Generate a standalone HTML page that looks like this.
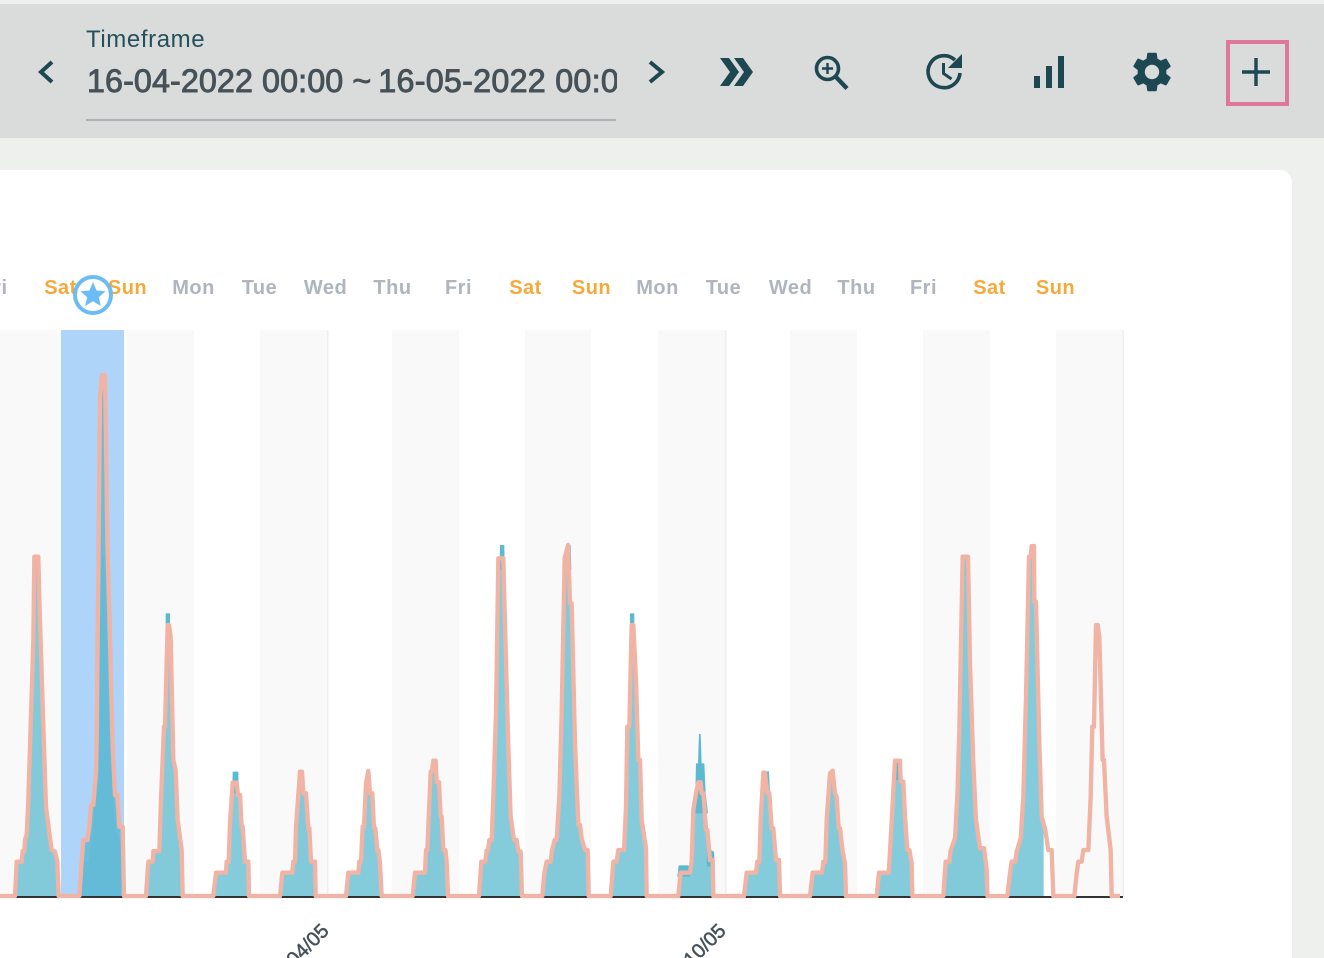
<!DOCTYPE html>
<html>
<head>
<meta charset="utf-8">
<style>
html,body{margin:0;padding:0;width:1324px;height:958px;overflow:hidden;background:#eef0ee;}
body{position:relative;font-family:"Liberation Sans",sans-serif;}
.bar{position:absolute;left:0;top:4px;width:1324px;height:134px;background:#dadcdc;}
.card{position:absolute;left:-20px;top:170px;width:1312px;height:820px;background:#fff;border-radius:12px;}
.tf{position:absolute;left:86px;top:26px;font-size:24px;line-height:27px;letter-spacing:.6px;color:#24505a;}
.date{position:absolute;left:87px;top:62px;width:530px;height:40px;overflow:hidden;white-space:nowrap;font-size:32.3px;line-height:38px;letter-spacing:.08px;color:#465158;-webkit-text-stroke:.9px #465158;}
.date .t{letter-spacing:-2px;}
.date .s{letter-spacing:.25px;}
.ul{position:absolute;left:86px;top:119px;width:530px;height:2px;background:#aab0b3;}
.box{position:absolute;left:1226px;top:40px;width:55px;height:58px;border:4px solid #dd789c;}
svg{position:absolute;left:0;top:0;}
</style>
</head>
<body>
<div class="bar"></div>
<div class="card"></div>
<div class="tf">Timeframe</div>
<div class="date">16-04-2022 00:00 <span class="t">~</span> <span class="s">16-05-2022 00:0</span></div>
<div class="ul"></div>
<div class="box"></div>
<svg width="1324" height="958" viewBox="0 0 1324 958">
  <defs>
    <path id="a" d="M0 1068H45L50 965H65L68 933H73L75 900L80 885L85 780L92 560L100 300L103 50H115L118 180L125 400L132 620L138 800L150 895L155 930L165 935L172 965L176 1068H238L245 965L250 900H262L268 860L273 795H280L288 700L290 600L296 0L300 -426L306 -495H315L318 -300L322 0L330 300L338 620L345 765H352L358 860H368L372 1068H438L445 965H458L460 933H478L483 780L492 560H495L503 255H507L512 290L520 660L527 690L533 840L545 930L548 1068H640L648 998H678L680 965H686L690 850L698 728H710L714 765H720L725 860H728L735 965H745L747 1068H840L847 998H877L880 965H885L888 860L900 695H906L910 760H918L925 865H928L933 965H945L947 1068H1020"/>
    <path id="b" d="M0 1098H18L25 1028H55L58 995H63L68 890H72L78 760L85 723L90 790H97L102 895H106L112 960H115L120 1000L125 1098H218L225 1028H255L258 960H262L268 820L272 725H276L280 692H287L290 757H297L302 860H305L310 960H316L320 995L324 1098H417L424 995H436L440 962H444L448 930H455L460 800L468 550L475 85H490L495 280L505 650L512 860L522 930H530L535 965H542L546 1098H607L613 1030L620 995H632L636 962L644 930H650L658 800L665 550L674 85L684 45L690 220H695L705 640L715 885H720L725 925L735 960H743L746 1098H812L820 995H830L835 960H852L858 830L862 590H868L875 285H880L888 450L895 690H900L905 870L918 955L920 1098H1015L1022 1028H1050L1055 995L1060 840L1068 790L1075 757H1082L1085 790H1090L1098 900H1102L1110 990H1118L1120 1098H1200"/>
    <path id="c" d="M0 1098H42L50 1028H78L82 995H88L92 870L100 728H105L112 790H118L125 895H130L138 990H147L150 1098H240L248 1028H276L280 995H286L290 870L300 730L308 722L315 790L320 800L326 895H330L338 965L345 1000L348 1098H440L447 1028H476L480 965L488 820L495 692H510L512 755H520L525 860L532 960H538L545 1000L547 1098H640L647 995H658L662 962L675 925L682 800L688 600L698 80H714L720 400L730 700L738 870L750 955H762L770 1020L772 1098H832L840 1030L845 995H856L860 965L872 925L880 800L888 500L897 80H902L905 48H912L913 215H918L928 640L935 860L945 895L955 960H965L970 1098H1033L1040 1030L1045 995H1055L1060 960H1075L1082 800L1087 590H1092L1098 285H1103L1108 320L1118 690H1122L1130 860L1142 960L1145 1098H1170"/>
    <clipPath id="cl"><rect x="-10" y="0" width="951" height="1100"/></clipPath>
  </defs>

  <!-- bands -->
  <g fill="#f9f9f9">
    <rect x="0" y="330" width="61" height="566"/>
    <rect x="127" y="330" width="67" height="566"/>
    <rect x="260" y="330" width="67" height="566"/>
    <rect x="392" y="330" width="67" height="566"/>
    <rect x="525" y="330" width="66" height="566"/>
    <rect x="658" y="330" width="67" height="566"/>
    <rect x="790" y="330" width="67" height="566"/>
    <rect x="923" y="330" width="67" height="566"/>
    <rect x="1056" y="330" width="67" height="566"/>
  </g>
  <g fill="#efefef">
    <rect x="327" y="330" width="1.5" height="566"/>
    <rect x="725" y="330" width="1.5" height="566"/>
    <rect x="1122.5" y="330" width="1.5" height="566"/>
  </g>
  <rect x="61" y="330" width="63" height="566" fill="#aed4fa"/>

  <!-- axis -->
  <rect x="0" y="896" width="1123" height="2" fill="#333"/>

  <!-- day labels -->
  <g font-family="'Liberation Sans',sans-serif" font-size="20" font-weight="700" letter-spacing=".5" text-anchor="middle" fill="#adb5bf">
    <text x="-6" y="294">Fri</text>
    <text x="60.5" y="294" fill="#f5a93b">Sat</text>
    <text x="127.5" y="294" fill="#f5a93b">Sun</text>
    <text x="193.5" y="294">Mon</text>
    <text x="259.5" y="294">Tue</text>
    <text x="325.5" y="294">Wed</text>
    <text x="392.5" y="294">Thu</text>
    <text x="458.5" y="294">Fri</text>
    <text x="525.5" y="294" fill="#f5a93b">Sat</text>
    <text x="591.5" y="294" fill="#f5a93b">Sun</text>
    <text x="657.5" y="294">Mon</text>
    <text x="723.5" y="294">Tue</text>
    <text x="790.5" y="294">Wed</text>
    <text x="856.5" y="294">Thu</text>
    <text x="923.5" y="294">Fri</text>
    <text x="989.5" y="294" fill="#f5a93b">Sat</text>
    <text x="1055.5" y="294" fill="#f5a93b">Sun</text>
  </g>

  <!-- star marker -->
  <circle cx="93" cy="295" r="18" fill="#fff" stroke="#6bbcf5" stroke-width="4"/>
  <polygon points="93,282 96.6,290.5 105.5,291.2 98.8,297.2 100.8,306 93,301.3 85.2,306 87.2,297.2 80.5,291.2 89.4,290.5" fill="#6bbcf5"/>

  <!-- teal areas -->
  <g transform="translate(0,540) scale(.33333)">
    <use href="#a" fill="#4ab4cc" fill-opacity=".68"/>
    <polygon points="245,1068 250,965 265,965 275,900 285,790 295,400 302,100 306,45 312,50 320,220 325,500 335,700 345,860 360,900 365,1068" fill="#4ab4cc" fill-opacity=".18"/>
    <polygon points="497,320 497,220 510,220 510,320" fill="#5bb9d2"/>
    <polygon points="697,760 698,695 715,695 716,760" fill="#5bb9d2"/>
  </g>
  <g transform="translate(340,530) scale(.33333)">
    <use href="#b" fill="#4ab4cc" fill-opacity=".68"/>
    <polygon points="479,120 480,45 493,45 494,120" fill="#5bb9d2"/>
    <polygon points="676,120 678,45 692,45 694,120" fill="#5bb9d2"/>
    <polygon points="870,320 870,250 883,250 883,320" fill="#5bb9d2"/>
    <polygon points="1012,1040 1016,1006 1046,1006 1052,1040" fill="#5bb9d2"/>
    <polygon points="1060,850 1066,790 1068,700 1074,700 1077,612 1082,612 1085,700 1093,700 1097,790 1104,850" fill="#5bb9d2"/>
    <polygon points="1100,1010 1104,900 1112,960 1122,965 1124,1010" fill="#5bb9d2"/>
  </g>
  <g transform="translate(730,530) scale(.33333)">
    <use href="#c" fill="#4ab4cc" fill-opacity=".68" clip-path="url(#cl)"/>
    <polygon points="100,770 105,724 117,724 120,790" fill="#5bb9d2"/>
    <polygon points="490,750 491,690 505,690 510,750" fill="#5bb9d2"/>
  </g>

  <!-- pink lines -->
  <g fill="none" stroke="#f0b3a4" stroke-width="13" stroke-linejoin="round">
    <use href="#a" transform="translate(0,540) scale(.33333)"/>
    <use href="#b" transform="translate(340,530) scale(.33333)"/>
    <use href="#c" transform="translate(730,530) scale(.33333)"/>
  </g>

  <!-- x labels -->
  <g font-family="'Liberation Sans',sans-serif" font-size="20" fill="#46525a" stroke="#46525a" stroke-width=".5" text-anchor="end">
    <text transform="translate(330,932) rotate(-45)">04/05</text>
    <text transform="translate(727,932) rotate(-45)">10/05</text>
  </g>

  <!-- toolbar icons -->
  <g fill="none" stroke="#1d4751">
    <polyline points="52,62 41,72 52,82" stroke-width="4"/>
    <polyline points="650,62 662,72 650,82" stroke-width="4"/>
    <circle cx="827.5" cy="68.5" r="11" stroke-width="3.6"/>
    <path d="M836 77L847 88.5" stroke-width="4.4"/>
    <path d="M827.5 63V74M822 68.5H833" stroke-width="2.4"/>
    <path d="M960 73A16 16 0 1 1 955 60" stroke-width="3.6"/>
    <path d="M943.5 63V73.5L951.5 79" stroke-width="3"/>
    <path d="M1242 72H1270M1256 58V86" stroke-width="3.4"/>
  </g>
  <g fill="#1d4751">
    <polygon points="720,58 729,58 739,72 729,86 720,86 730,72"/>
    <polygon points="734,58 743,58 753,72 743,86 734,86 744,72"/>
    <polygon points="962,54 962,68 948,68"/>
    <rect x="1034" y="76" width="6" height="12"/>
    <rect x="1046" y="66" width="6" height="22"/>
    <rect x="1058" y="56" width="6" height="32"/>
    <path transform="translate(1128,48) scale(2)" d="M19.14 12.94c.04-.3.06-.61.06-.94 0-.32-.02-.64-.07-.94l2.03-1.58c.18-.14.23-.41.12-.61l-1.92-3.32c-.12-.22-.37-.29-.59-.22l-2.39.96c-.5-.38-1.03-.7-1.62-.94l-.36-2.54c-.04-.24-.24-.41-.48-.41h-3.84c-.24 0-.43.17-.47.41l-.36 2.54c-.59.24-1.13.57-1.62.94l-2.39-.96c-.22-.08-.47 0-.59.22L2.74 8.87c-.12.21-.08.47.12.61l2.03 1.58c-.05.3-.09.63-.09.94s.02.64.07.94l-2.03 1.58c-.18.14-.23.41-.12.61l1.92 3.32c.12.22.37.29.59.22l2.39-.96c.5.38 1.03.7 1.62.94l.36 2.54c.05.24.24.41.48.41h3.84c.24 0 .44-.17.47-.41l.36-2.54c.59-.24 1.13-.56 1.62-.94l2.39.96c.22.08.47 0 .59-.22l1.92-3.32c.12-.22.07-.47-.12-.61l-2.01-1.58zM12 15.6c-1.98 0-3.6-1.62-3.6-3.6s1.62-3.6 3.6-3.6 3.6 1.62 3.6 3.6-1.62 3.6-3.6 3.6z"/>
  </g>
</svg>
</body>
</html>
